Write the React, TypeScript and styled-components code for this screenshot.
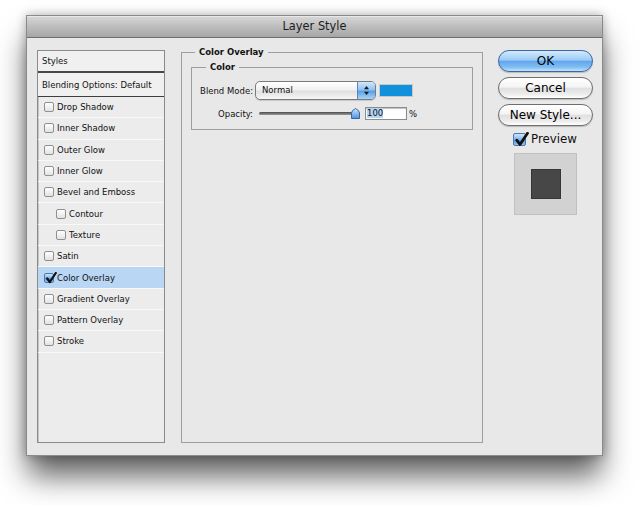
import React from 'react';
import styled, { createGlobalStyle } from 'styled-components';

const GlobalStyle = createGlobalStyle`
  html, body {
    margin: 0;
    padding: 0;
    background: #ffffff;
    font-family: 'DejaVu Sans', Verdana, sans-serif;
  }
`;

const Page = styled.div`
  width: 640px;
  height: 505px;
  box-sizing: border-box;
  padding: 15px 0 0 26px;
  overflow: hidden;
  background: #fff;
`;

const Window = styled.div`
  width: 577px;
  height: 441px;
  box-sizing: border-box;
  display: flex;
  flex-direction: column;
  background: #e8e8e8;
  border: 1px solid #8a8a8a;
  box-shadow: 0 22px 28px -2px rgba(0, 0, 0, 0.62), 0 0 10px rgba(0, 0, 0, 0.3);
`;

const TitleBar = styled.div`
  height: 21px;
  line-height: 21px;
  text-align: center;
  font-size: 11.4px;
  color: #1c1c1c;
  background: linear-gradient(#d8d8d8, #bdbdbd 50%, #a6a6a6);
  border-bottom: 1px solid #6c6c6c;
  box-shadow: inset 0 1px 0 #e8e8e8;
`;

const Body = styled.div`
  flex: 1;
  display: flex;
  align-items: stretch;
  padding: 12px 9px 12px 10px;
`;

/* ---------- left list ---------- */

const StyleList = styled.div`
  width: 128px;
  box-sizing: border-box;
  display: flex;
  flex-direction: column;
  background: #ececec;
  border: 1px solid #8a8a8a;
  box-shadow: inset 1px 1px 0 #c4c4c4;
`;

const HeadRow = styled.div<{ $h: number; $line: string }>`
  height: ${(p) => p.$h}px;
  display: flex;
  align-items: center;
  padding-left: 4px;
  font-size: 8.5px;
  color: #111;
  background: #f0f0f0;
  border-bottom: ${(p) => p.$line};
`;

const Row = styled.div<{ $indent?: boolean; $active?: boolean }>`
  height: 21.3px;
  box-sizing: border-box;
  display: flex;
  align-items: center;
  gap: 3px;
  padding-left: ${(p) => (p.$indent ? 18 : 6)}px;
  font-size: 8.5px;
  color: #111;
  background: ${(p) => (p.$active ? '#b9d6f4' : 'transparent')};
  border-bottom: 1px solid #f8f8f8;
`;

const Box = styled.span<{ $checked?: boolean; $size: number }>`
  position: relative;
  width: ${(p) => p.$size}px;
  height: ${(p) => p.$size}px;
  box-sizing: border-box;
  flex: none;
  border-radius: 2px;
  border: 1px solid ${(p) => (p.$checked ? '#4b78ad' : '#8f8f8f')};
  background: ${(p) =>
    p.$checked
      ? 'linear-gradient(#cfe6fb, #7fb5ec 50%, #4f94df 55%, #8fc4f4)'
      : 'linear-gradient(#ffffff, #e2e2e2)'};
  svg {
    position: absolute;
    left: 0;
    top: -2px;
  }
`;

const Check: React.FC<{ checked?: boolean; size: number }> = ({ checked, size }) => (
  <Box $checked={checked} $size={size}>
    {checked ? (
      <svg width={size + 2} height={size + 2} viewBox="0 0 12 12">
        <path d="M2.2 6.5 L4.8 10 L10.8 1" fill="none" stroke="#111" strokeWidth="2.2" strokeLinecap="round" strokeLinejoin="round" />
      </svg>
    ) : null}
  </Box>
);

/* ---------- centre ---------- */

const Group = styled.fieldset`
  margin: -3px 0 0 16px;
  width: 302px;
  box-sizing: border-box;
  padding: 4px 9px 0;
  border: 1px solid #9e9e9e;
  min-inline-size: 0;
  legend {
    margin-left: 4px;
    padding: 0 4px;
    font-size: 8.5px;
    font-weight: bold;
    line-height: 11px;
    color: #111;
  }
`;

const SubGroup = styled.fieldset`
  margin: 0;
  padding: 8px 8px 8px;
  border: 1px solid #9e9e9e;
  display: flex;
  flex-direction: column;
  gap: 6px;
  min-inline-size: 0;
  legend {
    margin-left: 6px;
    padding: 0 4px;
    font-size: 8.5px;
    font-weight: bold;
    line-height: 11px;
    color: #111;
  }
`;

const FieldRow = styled.div<{ $h: number }>`
  height: ${(p) => p.$h}px;
  display: flex;
  align-items: center;
`;

const Label = styled.span`
  width: 53px;
  margin-right: 2px;
  text-align: right;
  font-size: 8.5px;
  color: #111;
  white-space: nowrap;
`;

const Select = styled.div`
  width: 121px;
  height: 19px;
  box-sizing: border-box;
  display: flex;
  border: 1px solid #7a7a7a;
  border-radius: 5px;
  overflow: hidden;
  background: linear-gradient(#ffffff, #f1f1f1 45%, #e0e0e0 55%, #f6f6f6);
  box-shadow: 0 1px 1px rgba(0, 0, 0, 0.15);
`;

const SelectText = styled.span`
  flex: 1;
  padding-left: 6px;
  font-size: 8.5px;
  line-height: 17px;
  color: #111;
`;

const SelectArrows = styled.span`
  width: 17px;
  display: flex;
  align-items: center;
  justify-content: center;
  border-left: 1px solid #5d84b8;
  background: linear-gradient(#d2e8fc, #90c3f1 45%, #5aa0e8 55%, #a8d4f8);
`;

const Swatch = styled.span`
  width: 34px;
  height: 13px;
  margin-left: 3px;
  box-sizing: border-box;
  background: #1190dc;
  border: 1px solid #c8c8c8;
`;

const Slider = styled.div`
  display: flex;
  align-items: center;
  margin-left: 4px;
  width: 101px;
`;

const Track = styled.span`
  flex: 1;
  height: 3px;
  border-radius: 2px;
  background: linear-gradient(#4a4a4a, #9a9a9a);
`;

const NumberBox = styled.span`
  width: 42px;
  height: 13px;
  margin-left: 5px;
  box-sizing: border-box;
  border: 1px solid #8c8c8c;
  box-shadow: inset 0 1px 1px rgba(0, 0, 0, 0.25);
  background: #fff;
  font-size: 8.5px;
  line-height: 11px;
  padding-left: 1px;
  color: #111;
  span {
    background: #b5d3f3;
  }
`;

const Percent = styled.span`
  margin-left: 2px;
  font-size: 8.5px;
  color: #111;
`;

/* ---------- right column ---------- */

const Side = styled.div`
  width: 95px;
  margin-left: 15px;
  display: flex;
  flex-direction: column;
  gap: 5px;
`;

const AquaButton = styled.button<{ $primary?: boolean }>`
  height: 22px;
  padding: 0;
  border-radius: 11px;
  font-family: 'DejaVu Sans', Verdana, sans-serif;
  font-size: 12px;
  color: #000;
  border: 1px solid ${(p) => (p.$primary ? '#3b67a3' : '#6e6e6e')};
  background: ${(p) =>
    p.$primary
      ? 'linear-gradient(#d3eafd, #9ccbf6 45%, #62a7ec 52%, #7fbcf3 80%, #c2e3fc)'
      : 'linear-gradient(#ffffff, #f4f4f4 45%, #e0e0e0 52%, #ececec 80%, #ffffff)'};
  box-shadow: 0 1px 1px rgba(0, 0, 0, 0.2);
`;

const PreviewToggle = styled.label`
  display: flex;
  align-items: center;
  gap: 5px;
  height: 16px;
  padding-left: 15px;
  font-size: 11.8px;
  color: #111;
`;

const PreviewBox = styled.div`
  width: 63px;
  height: 62px;
  margin: 1px 0 0 16px;
  box-sizing: border-box;
  display: flex;
  align-items: center;
  justify-content: center;
  background: #d2d2d2;
  border: 1px solid #c0c0c0;
`;

const PreviewSwatch = styled.span`
  width: 30px;
  height: 30px;
  box-sizing: border-box;
  background: #474747;
  border: 1px solid #363636;
`;

const effects: { name: string; indent?: boolean; checked?: boolean }[] = [
  { name: 'Drop Shadow' },
  { name: 'Inner Shadow' },
  { name: 'Outer Glow' },
  { name: 'Inner Glow' },
  { name: 'Bevel and Emboss' },
  { name: 'Contour', indent: true },
  { name: 'Texture', indent: true },
  { name: 'Satin' },
  { name: 'Color Overlay', checked: true },
  { name: 'Gradient Overlay' },
  { name: 'Pattern Overlay' },
  { name: 'Stroke' },
];

export default function App() {
  return (
    <Page>
      <GlobalStyle />
      <Window>
        <TitleBar>Layer Style</TitleBar>
        <Body>
          <StyleList>
            <HeadRow $h={20} $line="2px solid #474747">Styles</HeadRow>
            <HeadRow $h={23} $line="1px solid #3f3f3f">Blending Options: Default</HeadRow>
            {effects.map((e) => (
              <Row key={e.name} $indent={e.indent} $active={e.checked}>
                <Check checked={e.checked} size={10} />
                {e.name}
              </Row>
            ))}
          </StyleList>

          <Group>
            <legend>Color Overlay</legend>
            <SubGroup>
              <legend>Color</legend>
              <FieldRow $h={19}>
                <Label>Blend Mode:</Label>
                <Select>
                  <SelectText>Normal</SelectText>
                  <SelectArrows>
                    <svg width="7" height="11" viewBox="0 0 7 11">
                      <path d="M3.5 1 L6 4.2 H1 Z M3.5 10 L6 6.8 H1 Z" fill="#1a1a1a" />
                    </svg>
                  </SelectArrows>
                </Select>
                <Swatch />
              </FieldRow>
              <FieldRow $h={15}>
                <Label>Opacity:</Label>
                <Slider>
                  <Track />
                  <svg width="9" height="11" viewBox="0 0 9 11" style={{ marginLeft: -4 }}>
                    <defs>
                      <linearGradient id="thumb" x1="0" y1="0" x2="0" y2="1">
                        <stop offset="0" stopColor="#cfe6fb" />
                        <stop offset="1" stopColor="#4a92de" />
                      </linearGradient>
                    </defs>
                    <path d="M0.5 5 Q0.5 2.5 4.5 0.5 Q8.5 2.5 8.5 5 V10.5 H0.5 Z" fill="url(#thumb)" stroke="#3a679f" strokeWidth="1" />
                  </svg>
                </Slider>
                <NumberBox>
                  <span>100</span>
                </NumberBox>
                <Percent>%</Percent>
              </FieldRow>
            </SubGroup>
          </Group>

          <Side>
            <AquaButton $primary>OK</AquaButton>
            <AquaButton>Cancel</AquaButton>
            <AquaButton>New Style...</AquaButton>
            <PreviewToggle>
              <Check checked size={13} />
              Preview
            </PreviewToggle>
            <PreviewBox>
              <PreviewSwatch />
            </PreviewBox>
          </Side>
        </Body>
      </Window>
    </Page>
  );
}
